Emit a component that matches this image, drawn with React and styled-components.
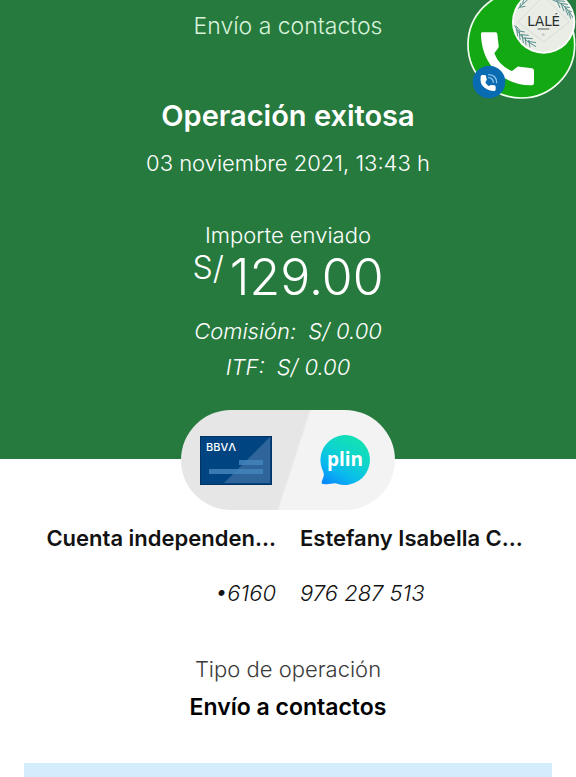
import React from 'react';
import styled, { createGlobalStyle } from 'styled-components';

const GlobalStyle = createGlobalStyle`
  body {
    margin: 0;
    background-color: #fff;
    color: #121212;
    font-family: Inter, 'Open Sans', sans-serif;
  }
`;

const Page = styled.main`
  display: flex;
  flex-direction: column;
  min-height: 100vh;
`;

const Hero = styled.header`
  display: flex;
  flex-direction: column;
  align-items: center;
  padding: 10px 24px 0;
  background-color: #277a3e;
  color: #fff;
  text-align: center;
`;

const Text = styled.p`
  margin: 0;
  color: ${({ $color }) => $color || 'inherit'};
  font-size: ${({ $size }) => $size || 22}px;
  font-weight: ${({ $weight }) => $weight || 300};
  line-height: 32px;
`;

const Title = styled.h1`
  margin: 54px 0 11px;
  font-size: 29px;
  font-weight: 600;
  line-height: 40px;
`;

const Amount = styled.div`
  display: flex;
  align-items: flex-start;
  gap: 6px;
  font-size: 50px;
  font-weight: 300;
  line-height: 52px;
`;

const Currency = styled.span`
  font-size: 32px;
  line-height: 34px;
`;

const AmountBlock = styled.section`
  display: flex;
  flex-direction: column;
  align-items: center;
  margin-top: 40px;
`;

const Fees = styled.dl`
  margin: 10px 0 25px;
  font-size: 22px;
  font-style: italic;
  font-weight: 300;
  line-height: 36px;
`;

const Fee = styled.div`
  display: flex;
  justify-content: center;
  gap: 12px;

  dd {
    margin: 0;
  }
`;

const Pill = styled.div`
  display: flex;
  align-items: center;
  justify-content: space-between;
  box-sizing: border-box;
  width: 214px;
  height: 100px;
  margin-bottom: -51px;
  padding: 0 24px 0 19px;
  border-radius: 50px;
  background: linear-gradient(108deg, #e6e6e6 52%, #f3f3f3 53%);
`;

const Parties = styled.section`
  display: grid;
  grid-template-columns: 1fr 1fr;
  column-gap: 24px;
  margin-top: 63px;
  padding: 0 24px;
`;

const Party = styled.div`
  display: flex;
  flex-direction: column;
  gap: 23px;
  text-align: ${({ $align }) => $align};
  white-space: nowrap;
`;

const PartyName = styled.h2`
  margin: 0;
  font-size: 22px;
  font-weight: 600;
  line-height: 32px;
`;

const PartyNumber = styled(Text)`
  font-style: italic;
`;

const Operation = styled.section`
  display: flex;
  flex-direction: column;
  gap: 6px;
  margin-top: 44px;
  text-align: center;
`;

const Notice = styled.div`
  flex: 1;
  min-height: 14px;
  margin: 40px 24px 0;
  background-color: #d4edfc;
`;

const CallBubble = styled.button`
  position: absolute;
  top: 0;
  right: 0;
  padding: 0;
  border: 0;
  background: none;
  cursor: pointer;

  svg {
    display: block;
  }
`;

const CardIcon = () => (
  <svg width="72" height="49" viewBox="0 0 72 49" role="img" aria-label="BBVA">
    <rect width="72" height="49" fill="#004481" />
    <path d="M24 47 70 1v46Z" fill="#2f659b" />
    <path d="M39 24h24v5H39zM9 33h54v5H9z" fill="#4384bb" opacity=".85" />
    <rect x=".5" y=".5" width="71" height="48" fill="none" stroke="#043263" />
    <text x="6" y="15" fill="#fff" fontFamily="Inter, sans-serif" fontSize="11" fontWeight="500">
      BBVΛ
    </text>
  </svg>
);

const PlinIcon = () => (
  <svg width="51" height="51" viewBox="0 0 51 51" role="img" aria-label="plin">
    <defs>
      <linearGradient id="plin" x1="0" y1="1" x2=".6" y2="0">
        <stop offset="0" stopColor="#0a7dff" />
        <stop offset=".35" stopColor="#09b9ee" />
        <stop offset=".7" stopColor="#0fd6cb" />
        <stop offset="1" stopColor="#13e0b4" />
      </linearGradient>
    </defs>
    <path
      d="M26 0a25 25 0 1 1-8 49C14 47 10 50 4 49c-2 0-3-1-2-3 1-4 3-5 1-10A25 25 0 0 1 26 0Z"
      fill="url(#plin)"
    />
    <text x="25" y="31" fill="#fff" fontFamily="Open Sans, sans-serif" fontSize="19" fontWeight="700" textAnchor="middle">
      plin
    </text>
  </svg>
);

const CallIcon = () => (
  <svg width="120" height="110" viewBox="0 0 360 330" aria-hidden="true">
    <defs>
      <clipPath id="avatar">
        <circle cx="263" cy="66" r="90" />
      </clipPath>
    </defs>
    <circle cx="196" cy="134" r="160" fill="#13a913" stroke="#f3fff1" strokeWidth="5" />
    <path
      d="M77 97h42q5 0 5 6l4 34q1 5-3 9l-10 14q14 38 53 53l13-10q4-4 9-3l38 5q6 1 6 7v37q0 7-7 7-58 1-102-37Q79 177 75 108q0-10 2-11Z"
      fill="#fff"
    />
    <circle cx="263" cy="66" r="95" fill="#fff" />
    <g clipPath="url(#avatar)">
      <circle cx="263" cy="66" r="90" fill="#e9ede6" />
      <path d="M263-12 340 66 263 126 186 66Z" fill="none" stroke="#cdd3ce" strokeWidth="2" />
      <g fill="none" stroke="#568f8d" strokeWidth="3">
        <path d="M176 76q14 38 64 64M182 86l3 24M190 94l2 26M198 102l4 27M208 112l2 24M218 120l4 22M184 92l22 4M194 104l24 2M204 114l26 2M216 124l24 4M180 78l12 14" />
        <path d="M290 0q38 10 62 54M300 2l28 2M312 10l30 4M324 20l26 4M334 32l20 4M304 4l8 20M316 12l8 22M328 24l8 22M338 36l6 20" />
        <path d="M186 26 218-4M192 20l2-18M200 12l3-14M190 22l18-3" />
      </g>
      <circle cx="262" cy="104" r="4" fill="#c2cbc6" />
    </g>
    <text x="263" y="78" fill="#262c2d" fontFamily="DejaVu Sans, sans-serif" fontSize="40" textAnchor="middle">
      LALÉ
    </text>
    <path d="M245 87h35" stroke="#5b6161" strokeWidth="3" />
    <circle cx="99" cy="246" r="49" fill="#096bb2" />
    <path
      d="M74 230q-3 21 10 32 12 11 31 11 4 0 4-5v-8q0-3-4-4l-10-1q-3 0-6 4-9-5-11-13l4-5q1-2 0-5l-2-8q-1-3-4-3h-8q-4 0-4 5Z"
      fill="#fff"
    />
    <path d="M98 224q23 1 24 24M98 233q13 1 14 14" fill="none" stroke="#8fc4e8" strokeWidth="4" strokeLinecap="round" />
  </svg>
);

const fees = [
  { label: 'Comisión:', value: 'S/ 0.00' },
  { label: 'ITF:', value: 'S/ 0.00' },
];

const App = () => {
  return (
    <Page>
      <GlobalStyle />
      <Hero>
        <Text $size={23} $color="#d9f3dd">Envío a contactos</Text>
        <Title>Operación exitosa</Title>
        <Text>03 noviembre 2021, 13:43 h</Text>

        <AmountBlock>
          <Text>Importe enviado</Text>
          <Amount>
            <Currency>S/</Currency>
            129.00
          </Amount>
        </AmountBlock>

        <Fees>
          {fees.map((fee) => (
            <Fee key={fee.label}>
              <dt>{fee.label}</dt>
              <dd>{fee.value}</dd>
            </Fee>
          ))}
        </Fees>

        <Pill>
          <CardIcon />
          <PlinIcon />
        </Pill>
      </Hero>

      <Parties>
        <Party $align="right">
          <PartyName>Cuenta independen...</PartyName>
          <PartyNumber>•6160</PartyNumber>
        </Party>
        <Party $align="left">
          <PartyName>Estefany Isabella C...</PartyName>
          <PartyNumber>976 287 513</PartyNumber>
        </Party>
      </Parties>

      <Operation>
        <Text $color="#3a3a3a">Tipo de operación</Text>
        <Text $size={23} $weight={600} $color="#000">Envío a contactos</Text>
      </Operation>

      <Notice />

      <CallBubble type="button" aria-label="Llamada de LALÉ">
        <CallIcon />
      </CallBubble>
    </Page>
  );
};

export default App;
